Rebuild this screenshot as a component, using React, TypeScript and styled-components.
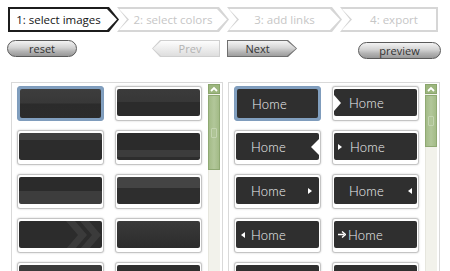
import styled, { createGlobalStyle, css } from "styled-components";
import type { ReactNode } from "react";

const GlobalStyle = createGlobalStyle`
  html, body {
    margin: 0;
    padding: 0;
    background: #fff;
    overflow: hidden;
  }
  body {
    font-family: "Open Sans", "DejaVu Sans", sans-serif;
  }
`;

const Page = styled.div`
  width: 450px;
  height: 271px;
  overflow: hidden;
  padding-top: 7px;
  box-sizing: border-box;
`;

/* ---------- wizard steps ---------- */

type StepKind = "first" | "mid" | "last";

const stepClip: Record<StepKind, string> = {
  first:
    "polygon(0 0, calc(100% - 10px) 0, 100% 50%, calc(100% - 10px) 100%, 0 100%)",
  mid: "polygon(0 0, calc(100% - 10px) 0, 100% 50%, calc(100% - 10px) 100%, 0 100%, 10px 50%)",
  last: "polygon(0 0, 100% 0, 100% 100%, 0 100%, 10px 50%)",
};

const Steps = styled.div`
  display: flex;
  padding-left: 8px;
  height: 25px;
`;

const Step = styled.div<{ $kind: StepKind; $active?: boolean; $w: number }>`
  width: ${(p) => p.$w}px;
  height: 25px;
  box-sizing: border-box;
  padding: 2px;
  margin-left: ${(p) => (p.$kind === "first" ? 0 : -2)}px;
  background: ${(p) => (p.$active ? "#1c1c1c" : "#d6d6d6")};
  clip-path: ${(p) => stepClip[p.$kind]};
`;

const StepFace = styled.div<{ $kind: StepKind; $active?: boolean }>`
  height: 100%;
  box-sizing: border-box;
  background: #fff;
  clip-path: ${(p) => stepClip[p.$kind]};
  display: flex;
  align-items: center;
  justify-content: center;
  padding-left: ${(p) => (p.$kind === "first" ? 0 : 10)}px;
  padding-right: ${(p) => (p.$kind === "last" ? 0 : 10)}px;
  font-size: 11.5px;
  color: ${(p) => (p.$active ? "#151515" : "#c6c6c6")};
  white-space: nowrap;
`;

/* ---------- control buttons ---------- */

const Controls = styled.div`
  display: flex;
  align-items: center;
  height: 17px;
  margin-top: 8px;
  padding: 0 9px 0 7px;
`;

const Pill = styled.button<{ $w: number }>`
  width: ${(p) => p.$w}px;
  height: 17px;
  box-sizing: border-box;
  padding: 0;
  border: 1px solid #5a5a5a;
  border-radius: 9px;
  background: linear-gradient(#f3f3f3, #d2d2d2 45%, #b2b2b2 70%, #989898);
  font: 11px "Open Sans", "DejaVu Sans", sans-serif;
  color: #333;
  line-height: 14px;
`;

const arrowClip = {
  left: "polygon(8px 0, 100% 0, 100% 100%, 8px 100%, 0 50%)",
  right:
    "polygon(0 0, calc(100% - 9px) 0, 100% 50%, calc(100% - 9px) 100%, 0 100%)",
};

const ArrowBtn = styled.div<{
  $dir: "left" | "right";
  $w: number;
  $off?: boolean;
}>`
  width: ${(p) => p.$w}px;
  height: 17px;
  box-sizing: border-box;
  padding: 1px;
  background: ${(p) => (p.$off ? "#cfcfcf" : "#6f6f6f")};
  clip-path: ${(p) => arrowClip[p.$dir]};
`;

const ArrowFace = styled.div<{ $dir: "left" | "right"; $off?: boolean }>`
  height: 100%;
  box-sizing: border-box;
  clip-path: ${(p) => arrowClip[p.$dir]};
  display: flex;
  align-items: center;
  justify-content: center;
  padding-left: ${(p) => (p.$dir === "left" ? 8 : 0)}px;
  padding-right: ${(p) => (p.$dir === "right" ? 9 : 0)}px;
  font-size: 11px;
  ${(p) =>
    p.$off
      ? css`
          background: linear-gradient(#fdfdfd, #ececec 55%, #dedede);
          color: #b3b3b3;
        `
      : css`
          background: linear-gradient(#f4f4f4, #d6d6d6 45%, #b3b3b3 75%, #9e9e9e);
          color: #333;
        `}
`;

/* ---------- panels ---------- */

const Panels = styled.div`
  display: flex;
  gap: 5px;
  margin-top: 25px;
  padding-left: 11px;
`;

const Panel = styled.div`
  display: flex;
  align-items: flex-start;
  height: 200px;
  padding: 3px 2px 0 5px;
  border: 1px solid #d9d9d9;
`;

const TileGrid = styled.div`
  display: grid;
  grid-template-columns: 87px 87px;
  column-gap: 11px;
  row-gap: 9px;
`;

const Tile = styled.div<{ $selected?: boolean }>`
  height: 35px;
  box-sizing: border-box;
  border-radius: 3px;
  padding: 2px 1px 4px;
  border: 1px solid #c4c4c4;
  background: #fff;
  box-shadow: 0 0 2px rgba(0, 0, 0, 0.22);
  ${(p) =>
    p.$selected &&
    css`
      padding: 2px;
      border-color: #7f9cbc;
      background: #819fbf;
      box-shadow: none;
    `}
`;

const Face = styled.div<{ $bg?: string; $pl?: number }>`
  height: 100%;
  border-radius: 2px;
  background: ${(p) => p.$bg ?? "#2f2f2f"};
  display: flex;
  align-items: center;
  overflow: hidden;
  padding-left: ${(p) => p.$pl ?? 0}px;
  color: #f2f2f2;
  font: 300 13px Lato, "DejaVu Sans", sans-serif;
  letter-spacing: 0.2px;
  white-space: nowrap;
`;

const Label = styled.span<{ $gap?: number }>`
  margin-left: ${(p) => p.$gap ?? 0}px;
`;

const Notch = styled.span<{ $side: "left" | "right" }>`
  width: 0;
  height: 0;
  border-top: 8px solid transparent;
  border-bottom: 8px solid transparent;
  ${(p) =>
    p.$side === "left"
      ? css`
          border-left: 7px solid #fff;
        `
      : css`
          border-right: 8px solid #fff;
          margin-left: auto;
        `}
`;

const Tri = styled.span<{ $dir: "left" | "right"; $gap?: number }>`
  width: 0;
  height: 0;
  margin-left: ${(p) => p.$gap ?? 0}px;
  border-top: 3px solid transparent;
  border-bottom: 3px solid transparent;
  ${(p) =>
    p.$dir === "right"
      ? css`
          border-left: 4px solid #fff;
        `
      : css`
          border-right: 4px solid #fff;
        `}
`;

const Scrollbar = styled.div`
  width: 12px;
  margin-left: 6px;
  margin-top: -2px;
  align-self: stretch;
  display: flex;
  flex-direction: column;
  background: #f2f2eb;
  box-shadow: inset 1px 0 0 #e6e6de;
`;

const ScrollBtn = styled.div`
  height: 10px;
  box-sizing: border-box;
  background: #9cb67e;
  border: 1px solid #8aa56c;
  display: flex;
  align-items: center;
  justify-content: center;
`;

const Thumb = styled.div<{ $h: number }>`
  height: ${(p) => p.$h}px;
  box-sizing: border-box;
  margin-top: 1px;
  background: linear-gradient(90deg, #a3bb87, #b2c79a 50%, #a3bb87);
  border: 1px solid #8fa973;
  display: flex;
  align-items: center;
  justify-content: center;
`;

const Grip = styled.div`
  width: 4px;
  height: 8px;
  border: 1px solid #c3d4b0;
  border-radius: 1px;
`;

const UpIcon = () => (
  <svg width="8" height="6" viewBox="0 0 8 6">
    <path d="M1 5 L4 2 L7 5" fill="none" stroke="#fff" strokeWidth="1.8" />
  </svg>
);

const RightArrow = () => (
  <svg width="8" height="7" viewBox="0 0 8 7">
    <path d="M0 3.5 H6" stroke="#fff" strokeWidth="1.4" />
    <path d="M4 0.5 L7.5 3.5 L4 6.5" fill="none" stroke="#fff" strokeWidth="1.4" />
  </svg>
);

const Chevrons = () => (
  <svg width="40" height="28" viewBox="0 0 40 28" style={{ marginLeft: "auto" }}>
    <path d="M4 0 L16 14 L4 28 H13 L25 14 L13 0 Z" fill="#3b3b3b" />
    <path d="M18 0 L30 14 L18 28 H27 L39 14 L27 0 Z" fill="#3b3b3b" />
  </svg>
);

const ScrollBar = ({ thumb }: { thumb: number }) => (
  <Scrollbar>
    <ScrollBtn>
      <UpIcon />
    </ScrollBtn>
    <Thumb $h={thumb}>
      <Grip />
    </Thumb>
  </Scrollbar>
);

const styleTiles: { bg: string; extra?: ReactNode }[] = [
  { bg: "linear-gradient(#3d3d3d, #383838 48%, #2b2b2b 52%, #2c2c2c)" },
  { bg: "linear-gradient(#3b3b3b, #373737 48%, #2b2b2b 48%)" },
  { bg: "linear-gradient(#404040 0 27%, #2c2c2c 27%)" },
  { bg: "linear-gradient(#2b2b2b 0 62%, #3c3c3c 62% 88%, #2d2d2d 88%)" },
  { bg: "linear-gradient(#2b2b2b 0 50%, #3d3d3d 50%)" },
  { bg: "linear-gradient(#444 0 40%, #2e2e2e 40%)" },
  { bg: "#2c2c2c", extra: <Chevrons /> },
  { bg: "linear-gradient(#3a3a3a, #2c2c2c)" },
  { bg: "linear-gradient(#3a3a3a 0 30%, #2c2c2c 30%)" },
  { bg: "#2e2e2e" },
];

const linkTiles: { pl: number; body: ReactNode }[] = [
  { pl: 15, body: <Label>Home</Label> },
  {
    pl: 0,
    body: (
      <>
        <Notch $side="left" />
        <Label $gap={8}>Home</Label>
      </>
    ),
  },
  {
    pl: 15,
    body: (
      <>
        <Label>Home</Label>
        <Notch $side="right" />
      </>
    ),
  },
  {
    pl: 4,
    body: (
      <>
        <Tri $dir="right" />
        <Label $gap={8}>Home</Label>
      </>
    ),
  },
  {
    pl: 15,
    body: (
      <>
        <Label>Home</Label>
        <Tri $dir="right" $gap={22} />
      </>
    ),
  },
  {
    pl: 15,
    body: (
      <>
        <Label>Home</Label>
        <Tri $dir="left" $gap={24} />
      </>
    ),
  },
  {
    pl: 5,
    body: (
      <>
        <Tri $dir="left" />
        <Label $gap={6}>Home</Label>
      </>
    ),
  },
  {
    pl: 4,
    body: (
      <>
        <RightArrow />
        <Label $gap={2}>Home</Label>
      </>
    ),
  },
  { pl: 15, body: null },
  { pl: 15, body: null },
];

const steps: { label: string; kind: StepKind; w: number }[] = [
  { label: "1: select images", kind: "first", w: 111 },
  { label: "2: select colors", kind: "mid", w: 112 },
  { label: "3: add links", kind: "mid", w: 115 },
  { label: "4: export", kind: "last", w: 98 },
];

export default function App() {
  return (
    <Page>
      <GlobalStyle />
      <Steps>
        {steps.map((s, i) => (
          <Step key={s.label} $kind={s.kind} $w={s.w} $active={i === 0}>
            <StepFace $kind={s.kind} $active={i === 0}>
              {s.label}
            </StepFace>
          </Step>
        ))}
      </Steps>

      <Controls>
        <Pill $w={70}>reset</Pill>
        <div style={{ marginLeft: 75 }}>
          <ArrowBtn $dir="left" $w={68} $off>
            <ArrowFace $dir="left" $off>
              Prev
            </ArrowFace>
          </ArrowBtn>
        </div>
        <div style={{ marginLeft: 7 }}>
          <ArrowBtn $dir="right" $w={70}>
            <ArrowFace $dir="right">Next</ArrowFace>
          </ArrowBtn>
        </div>
        <div style={{ marginLeft: "auto" }}>
          <Pill $w={83}>preview</Pill>
        </div>
      </Controls>

      <Panels>
        <Panel>
          <TileGrid>
            {styleTiles.map((t, i) => (
              <Tile key={i} $selected={i === 0}>
                <Face $bg={t.bg}>{t.extra}</Face>
              </Tile>
            ))}
          </TileGrid>
          <ScrollBar thumb={75} />
        </Panel>
        <Panel>
          <TileGrid>
            {linkTiles.map((t, i) => (
              <Tile key={i} $selected={i === 0}>
                <Face $pl={t.pl}>{t.body}</Face>
              </Tile>
            ))}
          </TileGrid>
          <ScrollBar thumb={52} />
        </Panel>
      </Panels>
    </Page>
  );
}
